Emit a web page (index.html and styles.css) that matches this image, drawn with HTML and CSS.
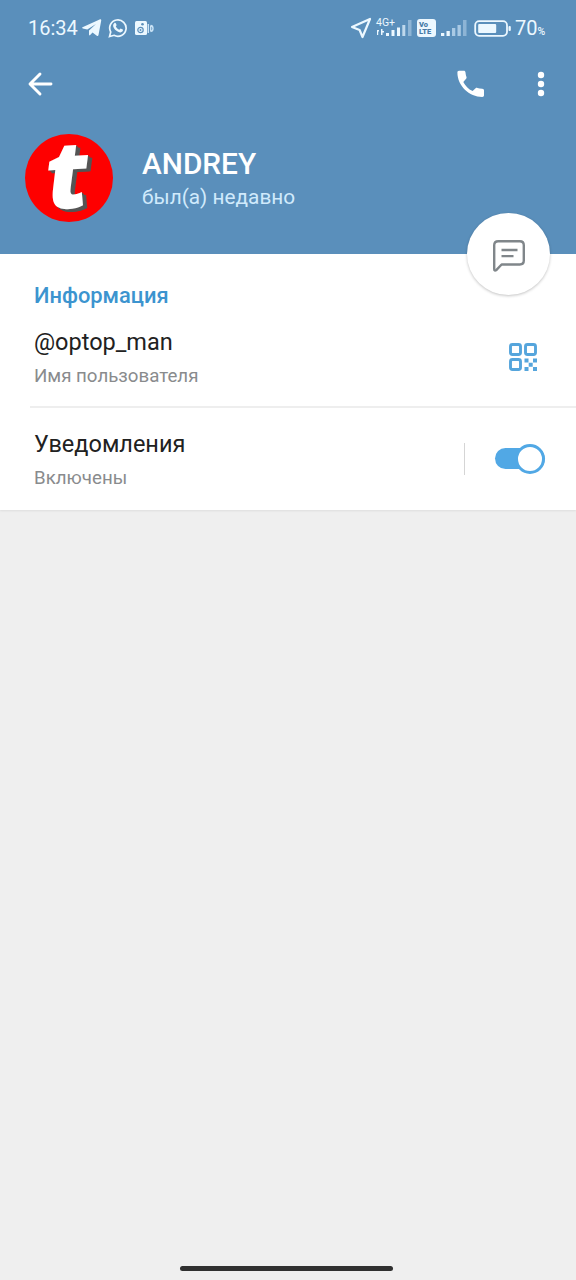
FILE: index.html
```html
<!DOCTYPE html>
<html lang="ru">
<head>
<meta charset="utf-8">
<title>ANDREY</title>
<link rel="stylesheet" href="styles.css">
</head>
<body>
<div class="screen">
  <header class="header">
    <div class="status">
      <span class="time">16:34</span>
      <svg class="ic-telegram" width="20" height="20" viewBox="0 0 20 20"><path fill="#ecf8ff" d="M.5 9.200 17.600 1.500c1-.4 1.800.1 1.600 1.200L16.500 17c-.2 1-.9 1.200-1.700.7l-4.300-3.100-2.300 2.500c-.5.5-1.200.4-1.200-.5v-4.100l7-6.600-8.700 5.700-4.500-1.200Q-.4 9.900.5 9.200Z"/></svg>
      <svg class="ic-whatsapp" width="20" height="20" viewBox="0 0 20 20"><path fill="none" stroke="#ecf8ff" stroke-width="1.700" d="M1.500 18.600 2.700 14a8.200 8.200 0 1 1 3.300 3.300Z"/><path fill="#ecf8ff" d="M6.200 5.200c.6-.6 1.400-.5 1.700.2l.7 1.600c.1.400-.6 1.100-.8 1.400.8 1.600 2 2.600 3.600 3.300l1.200-1.200 2.200 1.100c.4.200.1 1.500-.4 2-1.100 1.100-2.700.9-4.300.2-2.300-1-4.100-3-4.800-5-.4-1.400-.1-2.700.9-3.600Z"/></svg>
      <svg class="ic-device" width="19" height="16" viewBox="0 0 19 16"><path fill="#ecf8ff" d="M1.500 1h9Q12 1 12 2.500v11Q12 15 10.500 15h-9Q0 15 0 13.500v-11Q0 1 1.500 1Z"/><circle cx="7.500" cy="4.300" r="1.300" fill="#5a8fbb"/><circle cx="5.500" cy="10" r="2.700" fill="none" stroke="#5a8fbb" stroke-width="1.200"/><circle cx="5.500" cy="10" r="1" fill="#5a8fbb"/><path fill="none" stroke="#c9e2f5" stroke-width="1.400" d="M13.300 4v9M15.700 5.500v6M15.700 5.500q2.300.2 2.300 3t-2.300 3"/></svg>
      <div class="status-right">
        <svg class="ic-nav" width="22" height="22" viewBox="0 0 22 22"><path fill="none" stroke="#ecf8ff" stroke-width="2.200" stroke-linejoin="round" d="M20 2 12.500 20 9.600 13 2 10Z"/></svg>
        <div class="network">
          <span class="net-type">4G+</span>
          <svg class="net-bars" width="36" height="16" viewBox="0 0 36 16"><path fill="#ecf8ff" d="M1 10h2v1.500h-.8V15H1ZM5 9h1.500v2H8v1.500H6.500V15H5ZM10 13h3v3h-3ZM15.500 10h3v6h-3ZM21 7.500h3V16h-3Z"/><path fill="#bed8ec" d="M26.300 5h3v11h-3Z"/><path fill="#8db4d5" d="M32 0h3.500v16H32Z"/></svg>
        </div>
        <div class="volte"><span>Vo</span><span>LTE</span></div>
        <svg class="ic-signal" width="26" height="16" viewBox="0 0 26 16"><path fill="#ecf8ff" d="M0 13h3.300v3H0ZM5.500 11h3.300v5H5.500Z"/><path fill="#a9cae5" d="M11 8h3.300v8H11ZM16.500 5h3.300v11h-3.300Z"/><path fill="#8db4d5" d="M22 0h3.500v16H22Z"/></svg>
        <svg class="ic-battery" width="38" height="17" viewBox="0 0 38 17"><rect x="1.200" y="1.200" width="31.800" height="14.600" rx="4" fill="none" stroke="#ecf8ff" stroke-width="1.800"/><rect x="4.200" y="4" width="18" height="9" rx="1" fill="#ecf8ff"/><rect x="34.500" y="6" width="2.300" height="5" rx="1" fill="#ecf8ff"/></svg>
        <span class="percent">70<small>%</small></span>
      </div>
    </div>
    <nav class="toolbar">
      <svg class="ic-back" width="28" height="28" viewBox="0 0 28 28"><path fill="none" stroke="#fff" stroke-width="2.900" stroke-linecap="round" stroke-linejoin="round" d="M25 14H4.500M14 4 4 14l10 10"/></svg>
      <svg class="ic-phone" width="28" height="28" viewBox="0 0 28 28"><path fill="#fff" d="M2 .8h4.800c1 0 1.600.7 1.700 1.600.2 1.900.5 3.200 1 4.600.2.700.1 1.300-.4 1.800l-2.800 3.100c2.100 4.100 5 7.100 9.300 9.200l3-2.800c.5-.5 1.100-.6 1.800-.4 1.500.5 3 .8 4.900.9 1 .1 1.700.8 1.700 1.700v4.800c0 1-.7 1.700-1.700 1.700C12.200 27 .4 15.700.4 2.500.4 1.500 1 .8 2 .8Z"/></svg>
      <svg class="ic-more" width="8" height="26" viewBox="0 0 8 26"><circle cx="4" cy="4" r="3.200" fill="#fff"/><circle cx="4" cy="13" r="3.200" fill="#fff"/><circle cx="4" cy="22" r="3.200" fill="#fff"/></svg>
    </nav>
    <div class="profile">
      <div class="avatar"><span>t</span></div>
      <div class="identity">
        <h1 class="name">ANDREY</h1>
        <p class="seen">был(а) недавно</p>
      </div>
    </div>
    <button class="message" aria-label="Сообщение">
      <svg width="36" height="36" viewBox="0 0 36 36"><path fill="none" stroke="#80868a" stroke-width="2.400" stroke-linejoin="round" d="M7.200 3.200h21.600q4 0 4 4V22.500q0 4-4 4H10.600L5.500 31.900q-2.300 1.600-2.300-1V7.200q0-4 4-4Z"/><path fill="none" stroke="#80868a" stroke-width="2.300" d="M10.500 12h16M10.500 18.200h12"/></svg>
    </button>
  </header>
  <main class="card">
    <h2 class="section-title">Информация</h2>
    <section class="row row-user">
      <div class="row-text">
        <p class="value">@optop_man</p>
        <p class="label">Имя пользователя</p>
      </div>
      <svg class="ic-qr" width="28" height="28" viewBox="0 0 28 28"><g fill="none" stroke="#55a5dc" stroke-width="2.900"><rect x="1.500" y="1.500" width="10" height="10" rx="2"/><rect x="16.500" y="1.500" width="10" height="10" rx="2"/><rect x="1.500" y="16.500" width="10" height="10" rx="2"/></g><path fill="#55a5dc" d="M15.500 15.500h4v4h-4ZM24 15.500h4v4h-4ZM19.700 19.700h4v4h-4ZM15.500 24h4v4h-4ZM24 24h4v4h-4Z"/></svg>
    </section>
    <section class="row row-notify">
      <div class="row-text">
        <p class="value">Уведомления</p>
        <p class="label">Включены</p>
      </div>
      <div class="switch-area"><div class="switch"><i></i></div></div>
    </section>
  </main>
  <footer class="gesture"></footer>
</div>
</body>
</html>
```
FILE: styles.css
```css
* { box-sizing: border-box; }
body, h1, h2, p { margin: 0; }
svg { display: block; flex: none; }
body { font-family: Roboto, "Noto Sans", sans-serif; background: #efefef; }
.screen { width: 576px; height: 1280px; display: flex; flex-direction: column; overflow: hidden; }
.header { position: relative; height: 254px; background: #5a8fbb; color: #fff; }

.status { height: 56px; padding: 0 29px 0 28px; display: flex; align-items: center; color: #ecf8ff; }
.time { width: 54px; font-size: 20px; line-height: 24px; }
.ic-whatsapp { margin-left: 6px; }
.ic-device { margin-left: 7px; }
.status-right { margin-left: auto; display: flex; align-items: center; }
.network { width: 37px; height: 20px; margin-left: 4px; display: grid; }
.network > * { grid-area: 1 / 1; }
.net-type { font-size: 10.5px; line-height: 11px; margin-top: -1px; }
.net-bars { margin-top: 2px; }
.volte { width: 19px; height: 18px; margin-left: 4px; padding: 2px 0 0 2px; border-radius: 3px; background: #ecf8ff; color: #467ba7; display: flex; flex-direction: column; font-size: 7.5px; line-height: 7px; font-weight: 900; }
.ic-signal { margin-left: 5px; }
.ic-battery { margin-left: 7px; }
.percent { width: 32px; margin: 3px 0 0 3px; font-size: 20px; line-height: 24px; white-space: nowrap; }
.percent small { font-size: 10.5px; font-weight: 500; }

.toolbar { height: 56px; padding: 0 31px 0 26px; display: flex; align-items: center; }
.ic-phone { margin-left: auto; }
.ic-more { margin-left: 52px; }

.profile { display: flex; padding: 22px 25px 0; }
.avatar { width: 88px; height: 88px; border-radius: 50%; background: #fe0000; display: flex; justify-content: center; }
.avatar span { font: italic 800 94px/88px "Open Sans", sans-serif; margin-top: -7px; transform: translate(-2px, 1px) skew(5deg, -3deg); text-shadow: 1px 1px #555, 2px 2px #555, 3px 3px #555, 4px 3px #555; }
.identity { padding: 12px 0 0 29px; }
.name { font-size: 29.8px; line-height: 35px; font-weight: 500; }
.seen { margin-top: 4px; font-size: 20.8px; line-height: 24px; color: #d0eafc; }
.message { position: absolute; right: 26px; top: 213px; width: 83px; height: 82px; padding: 0; border: 0; border-radius: 50%; background: #fff; box-shadow: 0 1px 3px rgba(0,0,0,.24); display: flex; align-items: center; justify-content: center; }
.message svg { margin-top: 3px; }

.card { height: 256px; background: #fff; box-shadow: 0 1px 2px #ddd; }
.section-title { padding: 29px 0 0 34px; height: 61px; color: #3c94cf; font-size: 21.9px; line-height: 26px; font-weight: 500; }
.row { display: flex; justify-content: space-between; }
.row-user { height: 93px; padding-right: 39px; margin-left: 30px; padding-left: 4px; border-bottom: 2px solid #eee; }
.row-text { padding-top: 12px; }
.value { font-size: 23.5px; line-height: 30px; color: #212121; }
.label { margin-top: 7px; font-size: 18.7px; line-height: 24px; color: #898b8d; }
.ic-qr { margin-top: 28px; }
.row-notify { padding: 9px 31px 0 34px; }
.switch-area { margin-top: 26px; height: 32px; width: 81px; border-left: 1px solid #d5d5d5; display: flex; align-items: center; justify-content: flex-end; }
.switch { width: 50px; height: 21px; margin-bottom: 1px; display: flex; align-items: center; justify-content: flex-end; background: #51a8e5; border-radius: 11px; }
.switch i { flex: none; width: 30px; height: 30px; border: 3px solid #51a8e5; border-radius: 50%; background: #fff; }

.gesture { width: 213px; height: 5px; margin: auto auto 9px 180px; border-radius: 3px; background: #303030; }
```
